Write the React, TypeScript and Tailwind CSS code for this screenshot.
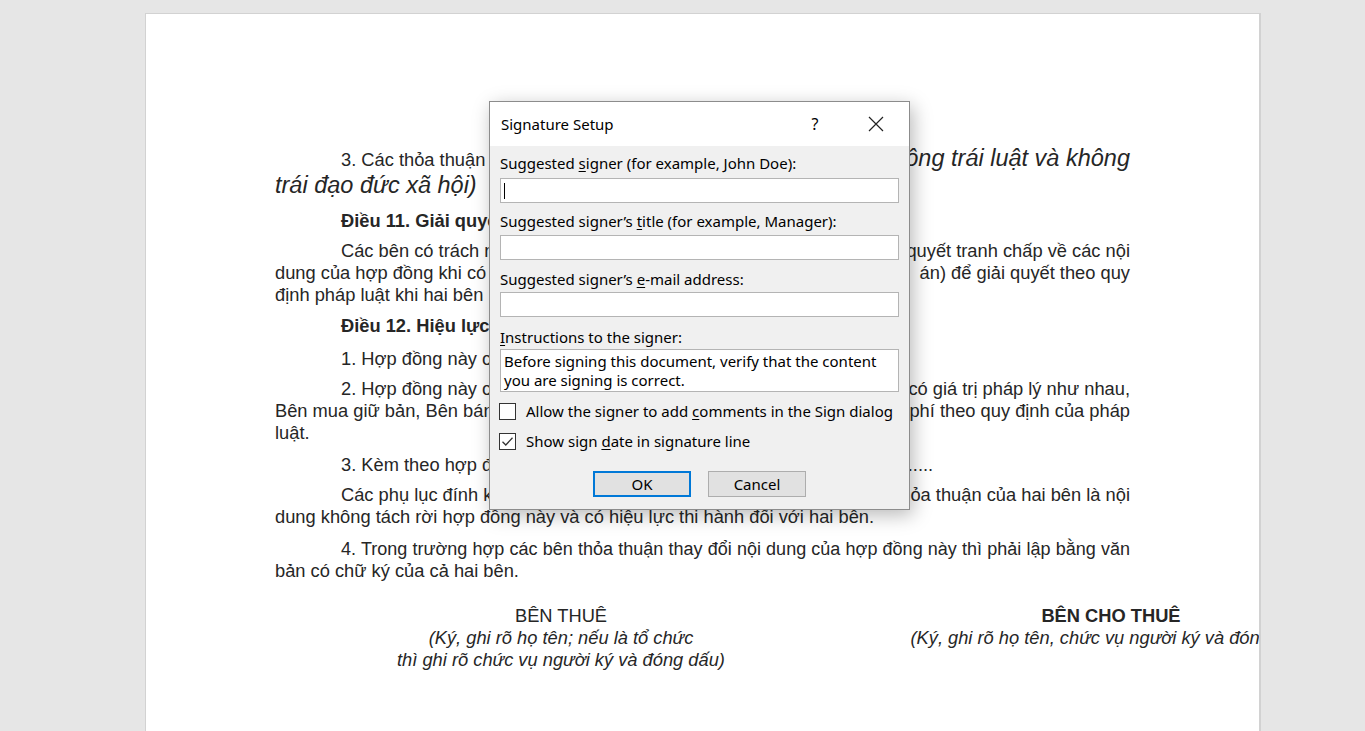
import React from 'react'

const docFont = "font-['Liberation_Sans',Arial,sans-serif]"
const uiFont = "font-['Noto_Sans','Open_Sans',sans-serif]"

function Line({ children, indent, bold }: { children: React.ReactNode; indent?: boolean; bold?: boolean }) {
  return (
    <div
      className={`h-[22px] overflow-hidden whitespace-nowrap leading-[22px] ${indent ? 'indent-[66px]' : ''} ${bold ? 'font-bold' : ''}`}
    >
      {children}
    </div>
  )
}

// justified line whose middle lies under the dialog
function Split({ left, right, indent }: { left: React.ReactNode; right: React.ReactNode; indent?: boolean }) {
  return (
    <div className="flex h-[22px] justify-between whitespace-nowrap leading-[22px]">
      <span className={indent ? 'pl-[66px]' : ''}>{left}</span>
      <span>{right}</span>
    </div>
  )
}

function TextBox({ cursor }: { cursor?: boolean }) {
  return (
    <div className="flex h-[25px] items-center border border-[#b4b4b4] bg-white pl-[3px]">
      {cursor && <div className="h-[16px] w-px bg-black" />}
    </div>
  )
}

function CheckBox({ checked }: { checked?: boolean }) {
  return (
    <div className="flex h-[17px] w-[17px] shrink-0 items-center justify-center border border-[#333] bg-white">
      {checked && (
        <svg width="13" height="13" viewBox="0 0 13 13" fill="none">
          <path d="M1.5 6.8 L4.8 10 L11.5 2.8" stroke="#333" strokeWidth="1.3" />
        </svg>
      )}
    </div>
  )
}

function SignatureDialog() {
  return (
    <div
      className={`absolute left-[489px] top-[101px] w-[421px] border border-[#8c8c8c] bg-[#f0f0f0] text-black shadow-[3px_5px_18px_rgba(0,0,0,0.28)] ${uiFont}`}
    >
      <div className="flex h-[44px] items-center gap-[15px] bg-white pl-[11px] pr-[10px]">
        <div className="flex-1 text-[15px]">Signature Setup</div>
        <div className="flex w-[46px] justify-center text-[16px]">?</div>
        <div className="flex w-[46px] justify-center">
          <svg width="16" height="16" viewBox="0 0 16 16" fill="none">
            <path d="M1 1 L15 15 M15 1 L1 15" stroke="#222" strokeWidth="1.2" />
          </svg>
        </div>
      </div>
      <div className="px-[10px] pb-[12px] pt-[8px] text-[15px]">
        <div className="h-[18px] leading-[18px]">
          Suggested <u className="underline-offset-2">s</u>igner (for example, John Doe):
        </div>
        <div className="mt-[6px]">
          <TextBox cursor />
        </div>
        <div className="mt-[9px] h-[18px] leading-[18px]">
          Suggested signer’s <u className="underline-offset-2">t</u>itle (for example, Manager):
        </div>
        <div className="mt-[5px]">
          <TextBox />
        </div>
        <div className="mt-[10px] h-[18px] leading-[18px]">
          Suggested signer’s <u className="underline-offset-2">e</u>-mail address:
        </div>
        <div className="mt-[4px]">
          <TextBox />
        </div>
        <div className="mt-[11px] h-[18px] leading-[18px]">
          <u className="underline-offset-2">I</u>nstructions to the signer:
        </div>
        <div className="mt-[3px] h-[43px] border border-[#b4b4b4] bg-white px-[3px] pt-[2px] leading-[19px]">
          Before signing this document, verify that the content
          <br />
          you are signing is correct.
        </div>
        <div className="ml-[-1px] mt-[11px] flex h-[17px] items-center gap-[10px] whitespace-nowrap">
          <CheckBox />
          <span>
            Allow the signer to add <u className="underline-offset-2">c</u>omments in the Sign dialog
          </span>
        </div>
        <div className="ml-[-1px] mt-[13px] flex h-[17px] items-center gap-[10px]">
          <CheckBox checked />
          <span>
            Show sign <u className="underline-offset-2">d</u>ate in signature line
          </span>
        </div>
        <div className="mt-[21px] flex justify-center gap-[17px]">
          <button className="h-[26px] w-[98px] border-2 border-[#0078d7] bg-[#e1e1e1]">OK</button>
          <button className="h-[26px] w-[98px] border border-[#adadad] bg-[#e1e1e1]">Cancel</button>
        </div>
      </div>
    </div>
  )
}

export default function App() {
  return (
    <div className="relative h-[731px] w-full overflow-hidden bg-[#e6e6e6] pl-[145px] pt-[13px]">
      <div
        className={`h-[760px] w-[1116px] overflow-hidden border border-r-2 border-[#d2d2d2] bg-white pl-[129px] pt-[131px] text-[18.3px] text-[#262626] ${docFont}`}
      >
        <div className="w-[855px]">
          <div className="flex h-[27px] items-baseline justify-between whitespace-nowrap leading-[27px]">
            <span className="pl-[66px]">
              3. Các thỏa thuận <i className="text-[23.5px]">khác (nếu có, nhưng phải đảm bảo</i>
            </span>
            <i className="text-[23.5px]">không trái luật và không</i>
          </div>
          <div className="h-[27px] leading-[27px]">
            <i className="text-[23.5px]">trái đạo đức xã hội)</i>
          </div>

          <div className="mt-[11px]">
            <Line indent bold>
              Điều 11. Giải quyết tranh chấp
            </Line>
          </div>

          <div className="mt-[8px]">
            <Split indent left="Các bên có trách nhiệm thương lượng, hòa giải để giải" right="quyết tranh chấp về các nội" />
            <Split left="dung của hợp đồng khi có tranh chấp thì đưa ra cơ quan (Tòa" right="án) để giải quyết theo quy" />
            <Line>định pháp luật khi hai bên không tự thỏa thuận được.</Line>
          </div>

          <div className="mt-[9px]">
            <Line indent bold>
              Điều 12. Hiệu lực của hợp đồng
            </Line>
          </div>

          <div className="mt-[11px]">
            <Line indent>1. Hợp đồng này có hiệu lực kể từ ngày ký.</Line>
          </div>

          <div className="mt-[8px]">
            <Split indent left="2. Hợp đồng này có 04 trang, được lập thành 03 bản," right="có giá trị pháp lý như nhau," />
            <Split left="Bên mua giữ bản, Bên bán giữ 01 bản, 01 bản nộp cơ quan thu lệ" right="phí theo quy định của pháp" />
            <Line>luật.</Line>
          </div>

          <div className="mt-[10px] w-[658px]">
            <Line indent>
              3. Kèm theo hợp đồng này là các phụ lục:
              ................................................................................................
            </Line>
          </div>

          <div className="mt-[8px]">
            <Split indent left="Các phụ lục đính kèm và các sửa đổi, bổ sung theo" right="thỏa thuận của hai bên là nội" />
            <Line>dung không tách rời hợp đồng này và có hiệu lực thi hành đối với hai bên.</Line>
          </div>

          <div className="mt-[10px]">
            <div className="h-[22px] overflow-hidden indent-[66px] text-justify text-[18px] leading-[22px] [text-align-last:justify]">
              4. Trong trường hợp các bên thỏa thuận thay đổi nội dung của hợp đồng này thì phải lập bằng văn
            </div>
            <Line>bản có chữ ký của cả hai bên.</Line>
          </div>

          <div className="ml-[11px] mt-[23px] grid grid-cols-[550px_550px] whitespace-nowrap text-center leading-[22px]">
            <div>
              <div>BÊN THUÊ</div>
              <div className="italic">(Ký, ghi rõ họ tên; nếu là tổ chức</div>
              <div className="italic">thì ghi rõ chức vụ người ký và đóng dấu)</div>
            </div>
            <div>
              <div className="font-bold">BÊN CHO THUÊ</div>
              <div className="italic">(Ký, ghi rõ họ tên, chức vụ người ký và đóng dấu)</div>
            </div>
          </div>
        </div>
      </div>
      <SignatureDialog />
    </div>
  )
}
